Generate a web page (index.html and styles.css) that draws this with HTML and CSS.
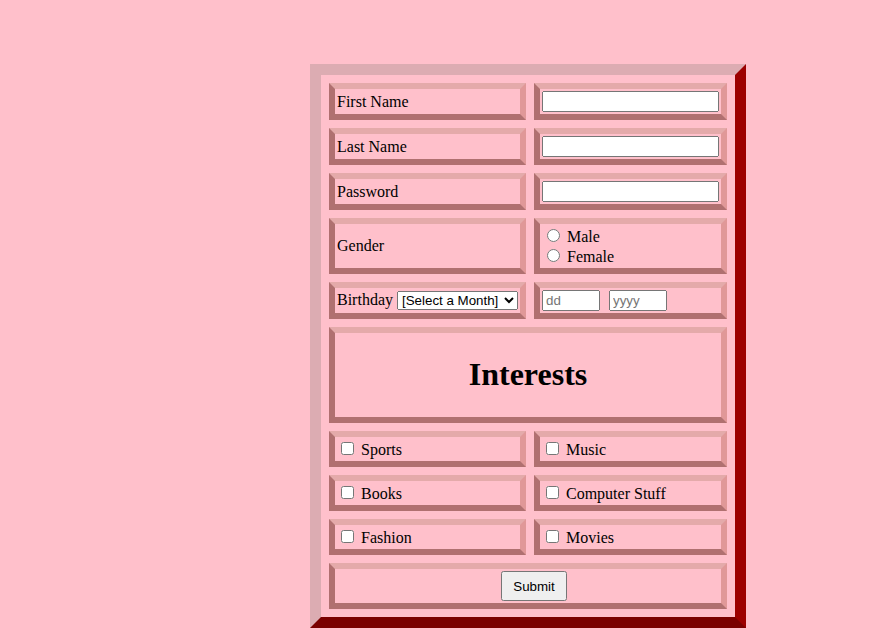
FILE: index.html
```html
<!DOCTYPE html>
<html lang="en">
<head>
  <meta charset="UTF-8">
  <title>Sign Up</title>
  <link rel="stylesheet" href="styles.css">
</head>
<body>
  <form class="signup">
    <table class="signup-table">
      <tr>
        <td class="col-label">First Name</td>
        <td class="col-field"><input type="text" class="text-input"></td>
      </tr>
      <tr>
        <td>Last Name</td>
        <td><input type="text" class="text-input"></td>
      </tr>
      <tr>
        <td>Password</td>
        <td><input type="password" class="text-input"></td>
      </tr>
      <tr>
        <td>Gender</td>
        <td>
          <input type="radio" name="gender" id="g-male"><label for="g-male"> Male</label><br>
          <input type="radio" name="gender" id="g-female"><label for="g-female"> Female</label>
        </td>
      </tr>
      <tr>
        <td>Birthday
          <select class="month-select">
            <option>[Select a Month]</option>
            <option>January</option>
            <option>February</option>
            <option>March</option>
            <option>April</option>
            <option>May</option>
            <option>June</option>
            <option>July</option>
            <option>August</option>
            <option>September</option>
            <option>October</option>
            <option>November</option>
            <option>December</option>
          </select>
        </td>
        <td><input type="text" class="date-input date-dd" placeholder="dd"> <input type="text" class="date-input" placeholder="yyyy"></td>
      </tr>
      <tr>
        <td colspan="2" class="heading-cell"><h1>Interests</h1></td>
      </tr>
      <tr>
        <td><input type="checkbox" id="i-sports"><label for="i-sports"> Sports</label></td>
        <td><input type="checkbox" id="i-music"><label for="i-music"> Music</label></td>
      </tr>
      <tr>
        <td><input type="checkbox" id="i-books"><label for="i-books"> Books</label></td>
        <td><input type="checkbox" id="i-computer"><label for="i-computer"> Computer Stuff</label></td>
      </tr>
      <tr>
        <td><input type="checkbox" id="i-fashion"><label for="i-fashion"> Fashion</label></td>
        <td><input type="checkbox" id="i-movies"><label for="i-movies"> Movies</label></td>
      </tr>
      <tr>
        <td colspan="2" class="submit-cell"><button type="submit" class="submit-btn">Submit</button></td>
      </tr>
    </table>
  </form>
</body>
</html>
```
FILE: styles.css
```css
body {
  background: #ffc0cb;
  margin: 8px;
  font-family: "Liberation Serif", "Times New Roman", serif;
  font-size: 16px;
  color: #000;
}
.signup { margin: 0; }
.signup-table {
  margin: 56px 0 0 302px;
  border-collapse: separate;
  border-spacing: 8px;
  border-style: solid;
  border-width: 11px;
  border-color: #dcacb2 #9c0000 #7a0000 #dcacb2;
}
.signup-table td {
  padding: 2px;
  border-style: solid;
  border-width: 6px;
  border-color: #e4aaaa #e09898 #b07070 #b07070;
  vertical-align: middle;
}
.col-label { width: 181px; }
.col-field { width: 177px; }
.text-input {
  box-sizing: border-box;
  width: 177px;
  margin: 0;
}
.date-input {
  box-sizing: border-box;
  width: 58px;
  margin: 0;
}
.date-dd { margin-right: 5px; }
.month-select {
  margin: 0;
  width: 121px;
}
.heading-cell { text-align: center; }
.heading-cell h1 {
  font-size: 32px;
  font-weight: 700;
  margin: 21.44px 0;
}
.submit-cell { text-align: center; }
.submit-btn {
  font-family: "Liberation Sans", Arial, sans-serif;
  font-size: 13.33px;
  padding: 6px 10px 5px;
  margin-left: 12px;
}
```
